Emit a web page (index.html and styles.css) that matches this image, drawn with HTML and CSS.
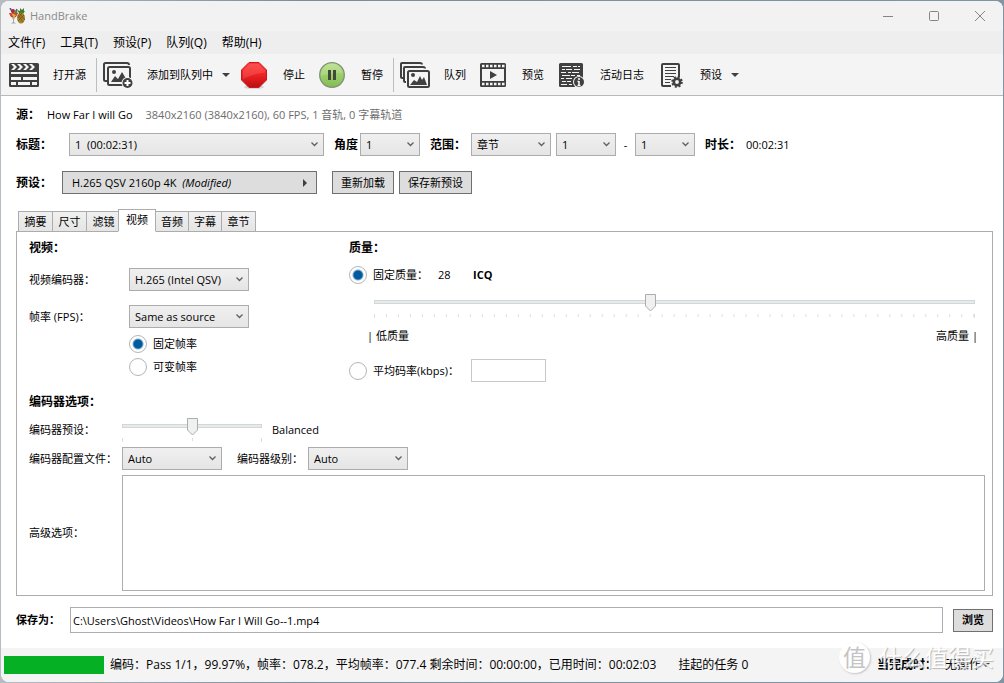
FILE: index.html
```html
<!DOCTYPE html>
<html lang="zh-CN">
<head>
<meta charset="utf-8">
<title>HandBrake</title>
<link rel="stylesheet" href="styles.css">
</head>
<body>
<div class="window">
  <header class="titlebar">
    <svg class="logo" viewBox="0 0 16 16" aria-hidden="true">
      <path d="M10 5 8 2l3 1 0-3 2 2 2-2v3l1 0-2 3z" fill="#3f7d2b"/>
      <ellipse cx="12" cy="10" rx="4" ry="5.500" fill="#a8802c"/>
      <path d="m9 7 5 7M10 5l6 7M15 7l-6 6M13 5l-4 5" stroke="#6f571c" stroke-width=".8"/>
      <path d="M0 5h9L6 10 5 11v3l2 1.500H2L4 14v-3L3 10z" fill="#a9a3a3"/>
      <path d="M0 5h9L7 9H2z" fill="#cf3f2f"/>
      <path d="m2 5 5 2-2 3z" fill="#f2a632"/>
      <path d="m1 0 3 5M8 1 6 5" stroke="#4b58b0" stroke-width="1.500"/>
      <circle cx="4" cy="3" r="2" fill="#b32930"/><circle cx="7" cy="4" r="1.500" fill="#4a8c38"/>
    </svg>
    <span class="app-name">HandBrake</span>
    <div class="caption">
      <button aria-label="最小化"><svg viewBox="0 0 12 12"><path d="M1 6.500h10"/></svg></button>
      <button aria-label="最大化"><svg viewBox="0 0 12 12"><rect x="1.500" y="1.500" width="9" height="9" rx="1"/></svg></button>
      <button aria-label="关闭"><svg viewBox="0 0 12 12"><path d="m1 1 10 10M11 1 1 11"/></svg></button>
    </div>
  </header>

  <nav class="menubar">
    <button>文件(F)</button><button>工具(T)</button><button>预设(P)</button><button>队列(Q)</button><button>帮助(H)</button>
  </nav>

  <div class="toolbar">
    <button class="tool"><svg viewBox="0 0 32 32">
      <rect x="1" y="4" width="30" height="24" rx="1.500" fill="#404040"/>
      <path d="m3 5 3 3-3 3h3l3-3-3-3zm6 0 3 3-3 3h3l3-3-3-3zm6 0 3 3-3 3h3l3-3-3-3zm6 0 3 3-3 3h3l3-3-3-3z" fill="#f4f4f4"/>
      <path d="M3 13h26v2H3zM3 18h10v3H3zm12 0h14v3H15zM3 23h5v3H3zm7 0h12v3H10zm14 0h5v3h-5z" fill="#f4f4f4"/>
    </svg><span>打开源</span></button>
    <i class="sep"></i>
    <button class="tool tool-menu"><svg viewBox="0 0 32 32">
      <g fill="none" stroke="#404040" stroke-width="2"><path d="M5 22H3.500Q2 22 2 20.500V5.500Q2 4 3.500 4H25q2 0 2 2"/><rect x="6" y="8" width="22" height="18" rx="1.500"/></g>
      <circle cx="12" cy="13" r="2" fill="#404040"/>
      <path d="m9 23 4-6 3 3 4-7 6 10z" fill="#404040"/>
      <circle cx="25.500" cy="24" r="6" fill="#f4f4f4"/><circle cx="25.500" cy="24" r="5" fill="#404040"/>
      <path d="M25.500 21v6m-3-3h6" stroke="#fff" stroke-width="2"/>
    </svg><span>添加到队列中</span><svg class="caret" viewBox="0 0 8 4"><path d="M0 0h8L4 4z"/></svg></button>
    <button class="tool"><svg viewBox="0 0 32 32">
      <defs><linearGradient id="red" x2="0" y2="1"><stop stop-color="#ff3a3a"/><stop offset=".5" stop-color="#ef2222"/><stop offset="1" stop-color="#b90f12"/></linearGradient></defs>
      <ellipse cx="16" cy="28" rx="10" ry="2" fill="#d5d5d5"/>
      <path d="M11 3.500h10l7.500 7.500v10L21 28.500H11L3.500 21V11z" fill="url(#red)" stroke="#c81b1e"/>
      <path d="M11.500 5h9l6.500 6.500v2Q17 14 5 20v-8.500z" fill="#fff" opacity=".12"/>
    </svg><span>停止</span></button>
    <button class="tool"><svg viewBox="0 0 32 32">
      <defs><linearGradient id="green" x2="0" y2="1"><stop stop-color="#b5df83"/><stop offset="1" stop-color="#82bd52"/></linearGradient></defs>
      <circle cx="16" cy="16" r="12.300" fill="url(#green)" stroke="#839078" stroke-width="1.300"/>
      <path d="M5 17a11 11 0 0 1 22-3Q17 13 5 17z" fill="#fff" opacity=".15"/>
      <path d="M12 11h3v10h-3zm5 0h3v10h-3z" fill="#3f4a39"/>
    </svg><span>暂停</span></button>
    <i class="sep"></i>
    <button class="tool"><svg viewBox="0 0 32 32">
      <g fill="none" stroke="#404040" stroke-width="2"><path d="M4 19H3q-1 0-1-1V4.500Q2 4 3 4h18q2 0 2 1.500M7 23H6q-1 0-1-1V9q0-1 1-1h18q2 0 2 1.500"/><rect x="9" y="12" width="21" height="16" rx="1.500"/></g>
      <circle cx="14" cy="16" r="2" fill="#404040"/>
      <path d="m11 26 4-5 3 2 3-6 2 4 2-3 3 8z" fill="#404040"/>
    </svg><span>队列</span></button>
    <button class="tool"><svg viewBox="0 0 32 32">
      <rect x="3" y="4" width="26" height="24" rx="1.500" fill="#404040"/>
      <path d="M5 10h22v12H5z" fill="#f4f4f4"/>
      <path d="M5 7h23M5 25h23" stroke="#f4f4f4" stroke-width="2.500" stroke-dasharray="2.500 1.500"/>
      <path d="m13 12 7 4-7 4z" fill="#404040"/>
    </svg><span>预览</span></button>
    <button class="tool"><svg viewBox="0 0 32 32">
      <rect x="4" y="4" width="24" height="24" rx="1.500" fill="#404040"/>
      <g stroke="#f4f4f4" stroke-width="1"><path d="M7 7.500h9m2 0h4m1 0h2M7 10.500h3m1 0h6m2 0h6M6 13.500h5m2 0h3m1 0h7M7 16.500h8m1 0h4m2 0h3M6 19.500h3m2 0h6M7 22.500h4m1 0h4M6 25.500h6m2 0h3"/></g>
      <circle cx="24" cy="23" r="6" fill="#f4f4f4"/><circle cx="24" cy="23" r="5" fill="#404040"/>
      <path d="M24 22v5m-1.500-4.500H24m-1.500 4h3" fill="none" stroke="#fff" stroke-width="1.500"/><circle cx="24" cy="20" r="1" fill="#fff"/>
    </svg><span>活动日志</span></button>
    <button class="tool"><svg viewBox="0 0 32 32">
      <path d="M16 27H8q-1 0-1-1V6q0-1 1-1h15q1 0 1 1v12" fill="none" stroke="#404040" stroke-width="2"/>
      <path d="M10 8.500h11M10 11.500h11M10 14.500h11M10 17.500h9M10 20.500h6M10 23.500h5" stroke="#404040" stroke-width="1"/>
      <circle cx="22" cy="23" r="3.200" fill="none" stroke="#404040" stroke-width="2.600"/>
      <circle cx="22" cy="23" r="4.800" fill="none" stroke="#404040" stroke-width="2" stroke-dasharray="2 1.770"/>
    </svg><span>预设</span><svg class="caret" viewBox="0 0 8 4"><path d="M0 0h8L4 4z"/></svg></button>
  </div>

  <main class="content">
    <div class="source"><b>源：</b><span>How Far I will Go</span><span class="muted">3840x2160 (3840x2160), 60 FPS, 1 音轨, 0 字幕轨道</span></div>

    <div class="title-row">
      <label class="title-label" for="title">标题：</label>
      <select id="title" class="wide"><option>1&nbsp; (00:02:31)</option></select>
      <label class="angle-label" for="angle">角度</label>
      <select id="angle" class="small"><option>1</option></select>
      <label class="range-label" for="range">范围：</label>
      <select id="range" class="medium"><option>章节</option></select>
      <select class="small" aria-label="起始章节"><option>1</option></select>
      <span class="dash">-</span>
      <select class="small" aria-label="结束章节"><option>1</option></select>
      <b class="duration-label">时长：</b><span>00:02:31</span>
    </div>

    <div class="preset-row">
      <b class="preset-label">预设：</b>
      <button class="btn preset"><span>H.265 QSV 2160p 4K&nbsp; <em>(Modified)</em></span><svg viewBox="0 0 4 8"><path d="M0 0v8l4-4z"/></svg></button>
      <button class="btn reload">重新加载</button>
      <button class="btn save-preset">保存新预设</button>
    </div>

    <div class="tabs" role="tablist">
      <button role="tab">摘要</button><button role="tab">尺寸</button><button role="tab">滤镜</button><button role="tab" class="active" aria-selected="true">视频</button><button role="tab">音频</button><button role="tab">字幕</button><button role="tab">章节</button>
    </div>

    <section class="panel" role="tabpanel">
      <div class="columns">
        <div class="video">
          <h2>视频：</h2>
          <div class="field"><label for="codec">视频编码器：</label><select id="codec"><option>H.265 (Intel QSV)</option></select></div>
          <div class="field"><label for="fps">帧率 (FPS)：</label><select id="fps"><option>Same as source</option></select></div>
          <div class="radios">
            <label class="radio"><input type="radio" name="rate" checked>固定帧率</label>
            <label class="radio"><input type="radio" name="rate">可变帧率</label>
          </div>
        </div>
        <div class="quality">
          <h2>质量：</h2>
          <div class="constant">
            <label class="radio"><input type="radio" name="quality" checked>固定质量：</label>
            <span class="value">28</span><b>ICQ</b>
          </div>
          <div class="slider slider-quality"><input type="range" min="0" max="50" value="23" aria-label="质量"><div class="ticks"></div></div>
          <div class="ends"><span>| 低质量</span><span>高质量 |</span></div>
          <div class="bitrate">
            <label class="radio" for="avg"><input type="radio" name="quality" id="avg">平均码率(kbps)：</label>
            <input type="text" class="box" aria-label="平均码率">
          </div>
        </div>
      </div>

      <h2 class="options-heading">编码器选项：</h2>
      <div class="option preset-option">
        <label for="speed">编码器预设：</label>
        <div class="slider slider-speed"><input id="speed" type="range" min="0" max="2" value="1"><div class="ticks"></div></div>
        <span>Balanced</span>
      </div>
      <div class="option">
        <label for="profile">编码器配置文件：</label>
        <select id="profile" class="hundred"><option>Auto</option></select>
        <label class="level-label" for="level">编码器级别：</label>
        <select id="level" class="hundred"><option>Auto</option></select>
      </div>
      <div class="option advanced">
        <label for="advanced">高级选项：</label>
        <textarea id="advanced"></textarea>
      </div>
    </section>

    <div class="save-row">
      <label for="path">保存为：</label>
      <input id="path" type="text" value="C:\Users\Ghost\Videos\How Far I Will Go--1.mp4">
      <button class="btn browse">浏览</button>
    </div>
  </main>

  <footer class="status">
    <div class="progress" role="progressbar" aria-label="编码进度"></div>
    <span>编码：Pass 1/1，99.97%，帧率：078.2，平均帧率：077.4 剩余时间：00:00:00，已用时间：00:02:03</span>
    <span class="pending">挂起的任务 0</span>
    <div class="when-done"><b>当完成时：</b><button>无操作<svg class="caret" viewBox="0 0 8 4"><path d="M0 0h8L4 4z"/></svg></button></div>
    <div class="watermark"><span class="badge">值</span><span>什么值得买</span></div>
  </footer>
</div>
</body>
</html>
```
FILE: styles.css
```css
* { box-sizing: border-box; }

body {
  margin: 0;
  height: 100vh;
  padding: 1px;
  background: linear-gradient(90deg, #b5bcc2, #7b8d9b 30%, #7f95a3);
  color: #000;
  font: 12px/16px "Open Sans", "Noto Sans CJK SC", sans-serif;
}

button, select, input, textarea { font: inherit; color: inherit; margin: 0; }
button { padding: 0; border: 0; background: none; white-space: nowrap; }
h2 { margin: 0; font-size: 12px; line-height: 16px; }

.window {
  display: flex;
  flex-direction: column;
  min-height: 100%;
  overflow: hidden;
  border-radius: 8px;
  background: #fff;
}

.titlebar {
  display: flex;
  flex: none;
  align-items: center;
  height: 30px;
  padding-left: 8px;
  background: #f2f2f2;
  color: #8a8a8a;
}
.logo { width: 16px; height: 16px; }
.app-name { margin-left: 5px; font-size: 11px; }
.caption { display: flex; align-self: stretch; margin-left: auto; }
.caption button { display: grid; place-items: center; width: 46px; }
.caption svg { width: 12px; height: 12px; fill: none; stroke: #858585; }

.menubar {
  display: flex;
  flex: none;
  align-items: center;
  gap: 15px;
  height: 23px;
  padding-left: 7px;
  background: #eee;
}

.toolbar {
  display: flex;
  flex: none;
  align-items: center;
  gap: 11px;
  height: 42px;
  padding-left: 7px;
  border-bottom: 1px solid #b9b9b9;
  background: #f4f4f4;
  font-size: 11px;
}
.tool { display: flex; align-items: center; gap: 13px; }
.tool > svg:first-child { width: 32px; height: 32px; }
.tool .caret { margin-left: -4px; }
.tool-menu { margin-right: -3px; }
.caret { width: 8px; height: 4px; fill: #404040; }
.sep { width: 1px; height: 34px; margin: 0 -6px 0 -1px; background: #b9bec5; }

.content {
  display: flex;
  flex: 1;
  flex-direction: column;
  padding: 10px 10px 15px 15px;
  font-size: 11px;
}
.source, .title-row, .preset-row, .save-row, .field, .option, .constant, .bitrate {
  display: flex;
  align-items: center;
}
.source b, .title-row label, .title-row b, .preset-row b { font-size: 12px; font-weight: 700; }
.source { gap: 10px; height: 18px; }
.source b { width: 21px; }
.muted { padding-left: 3px; color: #6d6d6d; }

select {
  appearance: none;
  height: 23px;
  padding: 0 18px 0 5px;
  border: 1px solid #acacac;
  border-radius: 0;
  background: url("data:image/svg+xml,%3Csvg xmlns='http://www.w3.org/2000/svg' width='7' height='5' fill='none' stroke='%23606060' stroke-width='1.3'%3E%3Cpath d='M.5.5l3 3 3-3'/%3E%3C/svg%3E") right 5px top 8px no-repeat, linear-gradient(#f0f0f0, #e5e5e5);
}
.title-row { margin-top: 9px; }
.title-label { width: 53px; }
.wide { width: 255px; }
.small { width: 60px; }
.medium { width: 80px; margin-right: 5px; }
.angle-label { width: 26px; margin-left: 10px; }
.range-label { width: 41px; margin-left: 10px; }
.dash { width: 19px; text-align: center; }
.duration-label { width: 41px; margin-left: 10px; }

.btn { height: 23px; border: 1px solid #707070; background: #ddd; }
.preset-row { margin-top: 15px; }
.preset-label { width: 46px; }
.preset { display: flex; align-items: center; justify-content: space-between; width: 255px; padding: 0 9px; }
.preset svg { width: 4px; height: 8px; fill: #404040; }
.reload { width: 62px; margin: 0 5px 0 15px; }
.save-preset { width: 73px; }

.tabs { display: flex; align-items: flex-end; margin: 15px 0 -1px 2px; z-index: 1; }
.tabs button {
  width: 35px;
  height: 21px;
  margin-right: -1px;
  border: 1px solid #acacac;
  background: linear-gradient(#f0f0f0, #e5e5e5);
}
.tabs .active { width: 38px; height: 23px; margin: 0 -1px 0 -2px; padding-bottom: 2px; border-bottom-color: #fff; background: #fff; z-index: 1; }
.tabs .active ~ button { width: 34px; }
.tabs .active ~ button:last-child { width: 35px; }

.panel {
  display: flex;
  flex: 1;
  flex-direction: column;
  padding: 8px 7px 4px 12px;
  border: 1px solid #acacac;
}
.columns { display: grid; grid-template-columns: 320px 1fr; padding-right: 10px; }
.field { margin-top: 14px; }
.field label { width: 100px; }
.field select { width: 120px; }
.video h2 + .field { margin-top: 12px; }
.radios { display: grid; gap: 5px; margin: 7px 0 0 100px; }
.radio { display: flex; align-items: center; gap: 6px; height: 18px; white-space: nowrap; }
.radio input {
  appearance: none;
  width: 18px;
  height: 18px;
  border: 1px solid #b5b5b5;
  border-radius: 50%;
  background: #fff;
}
.radio input:checked { background: radial-gradient(circle, #005a9e 0 4px, #fff 6px); }

.constant { margin-top: 10px; }
.constant .radio { width: 89px; }
.value { width: 35px; }

.slider {
  height: 25px;
  background:
    linear-gradient(#e7eaea, #e7eaea) center 7px / calc(100% - 2px) 2px no-repeat,
    linear-gradient(#d3d7d7, #d3d7d7) 0 6px / 100% 4px no-repeat;
}
.slider input {
  display: block;
  appearance: none;
  width: calc(100% + 10px);
  height: 18px;
  margin: 0 -5px;
  background: none;
}
.slider input::-webkit-slider-thumb {
  appearance: none;
  width: 11px;
  height: 18px;
  background: url("data:image/svg+xml,%3Csvg xmlns='http://www.w3.org/2000/svg' width='11' height='18'%3E%3Cpath d='M.5.5h10v11.500l-5 5-5-5z' fill='%23f0f0f0' stroke='%23acacac'/%3E%3C/svg%3E");
}
.ticks { height: 4px; margin-top: 2px; border: solid #ddd; border-width: 0 1px; }
.slider-quality .ticks {
  border: 0;
  background:
    linear-gradient(#ddd, #ddd) 0 0 / 1px 4px no-repeat,
    linear-gradient(#ddd, #ddd) 100% 0 / 1px 4px no-repeat,
    linear-gradient(90deg, #ddd 1px, transparent 1px) 0 0 / calc((100% - 1px) / 50) 3px repeat-x;
}
.slider-quality { margin: 10px 0 0 25px; }
.slider-speed { width: 140px; }
.slider-speed .ticks { background: linear-gradient(#ddd, #ddd) center 0 / 1px 3px no-repeat; }
.ends { display: flex; justify-content: space-between; margin: 9px -3px 0 18px; }
.bitrate { margin-top: 15px; }
.bitrate .radio { width: 122px; }
.box { width: 75px; height: 23px; padding: 0 4px; border: 1px solid #c8c8c8; }

.options-heading { margin-top: 12px; }
.option { margin-top: 5px; }
.option > label:first-child { width: 93px; flex: none; }
.preset-option { height: 24px; margin-top: 8px; gap: 0 10px; }
.preset-option > label:first-child { width: 83px; }
.hundred { width: 100px; }
.level-label { width: 71px; margin-left: 15px; }
.advanced { flex: 1; }
textarea { flex: 1; align-self: stretch; min-height: 60px; padding: 2px; border: 1px solid #abadb3; resize: none; }

.save-row { margin-top: 11px; }
.save-row label { width: 54px; font-weight: 700; }
.save-row input { flex: 1; height: 26px; padding: 0 2px; border: 1px solid #abadb3; }
.browse { width: 40px; margin-left: 10px; font-weight: 700; }

.status {
  position: relative;
  display: flex;
  flex: none;
  align-items: center;
  height: 34px;
  padding: 0 13px 0 3px;
  background: #f4f4f4;
  white-space: nowrap;
}
.progress { width: 100px; height: 18px; margin-right: 6px; background: #06b025; }
.pending { margin-left: 22px; }
.when-done { display: flex; gap: 8px; margin-left: auto; }
.when-done button { display: flex; align-items: center; gap: 1px; }
.watermark {
  position: absolute;
  right: 9px;
  bottom: 9px;
  display: flex;
  align-items: center;
  gap: 9px;
  color: #fff;
  font-size: 23px;
  line-height: 32px;
  text-shadow: 1px 1px 1px #aaa;
  opacity: .85;
  pointer-events: none;
}
.badge { width: 31px; height: 31px; border-radius: 50%; background: #fff; box-shadow: 1px 1px 2px #bbb; color: #bbb; text-align: center; text-shadow: none; line-height: 30px; }
```
